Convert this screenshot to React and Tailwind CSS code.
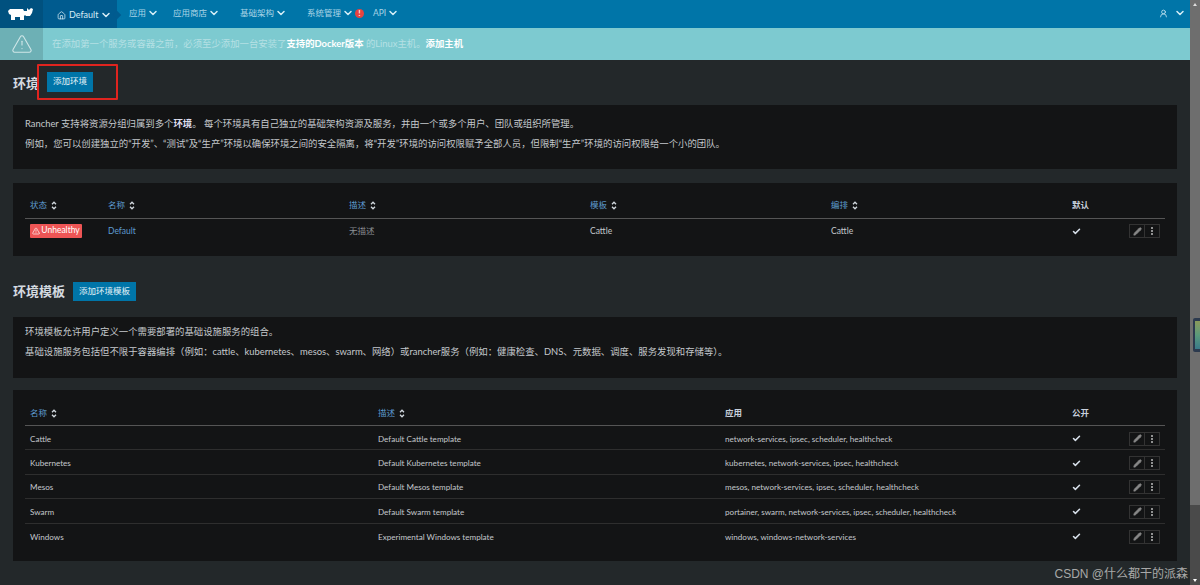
import React from 'react';
import { Check, ChevronDown, Home, Pencil, TriangleAlert, UserRound } from 'lucide-react';

const font = "font-['Lato','Noto_Sans_CJK_SC',sans-serif]";

function Logo() {
  return (
    <svg width="25" height="12" viewBox="0 0 25 12" fill="white">
      <path d="M0 3 L2 1 L15 1 L16 3 L19 3 L19 0 L21 2 L23 0 L25 1 L24 5 L22 8 L18 8 L17 7 L16 8 L16 12 L12 12 L12 9 L7 9 L7 12 L3 12 L3 7 L1 6 Z" />
    </svg>
  );
}

function Sort() {
  return (
    <svg width="6" height="9" viewBox="0 0 6 9" fill="none" stroke="#d4dae0" strokeWidth="1.3" className="ml-1 inline-block">
      <path d="M1 3.2 L3 1.2 L5 3.2 M1 5.8 L3 7.8 L5 5.8" />
    </svg>
  );
}

function NavItem({ label, className, children }) {
  return (
    <div className={`flex items-center gap-[1px] pb-[2px] text-[8.5px] text-[#a9d4e6] ${className}`}>
      {label}
      <ChevronDown size={12} strokeWidth={3} className="text-[#d5eef7]" />
      {children}
    </div>
  );
}

function RowActions() {
  return (
    <div className="flex h-[14px] w-[31px] border border-[#333]">
      <div className="flex flex-1 items-center justify-center border-r border-[#333]">
        <Pencil size={9} fill="#888" className="text-[#888]" />
      </div>
      <div className="flex flex-1 flex-col items-center justify-center gap-[1px]">
        <span className="h-[2px] w-[2px] rounded-full bg-[#bbb]" />
        <span className="h-[2px] w-[2px] rounded-full bg-[#bbb]" />
        <span className="h-[2px] w-[2px] rounded-full bg-[#bbb]" />
      </div>
    </div>
  );
}

const templates = [
  ['Cattle', 'Default Cattle template', 'network-services, ipsec, scheduler, healthcheck'],
  ['Kubernetes', 'Default Kubernetes template', 'kubernetes, network-services, ipsec, healthcheck'],
  ['Mesos', 'Default Mesos template', 'mesos, network-services, ipsec, scheduler, healthcheck'],
  ['Swarm', 'Default Swarm template', 'portainer, swarm, network-services, ipsec, scheduler, healthcheck'],
  ['Windows', 'Experimental Windows template', 'windows, windows-network-services'],
];

export default function App() {
  return (
    <div className={`${font} relative flex h-[585px] w-[1200px] overflow-hidden bg-[#23282a] text-[8.5px] text-[#c4c8cc]`}>
      <div className="flex w-[1190px] flex-col">
        {/* header */}
        <header className="flex h-[28px] items-center bg-[#0075a8]">
          <div className="flex h-full w-[43px] items-center justify-center bg-[#00517f] pr-[2px]">
            <Logo />
          </div>
          <div className="relative flex h-full w-[74px] items-center gap-[3px] bg-[#005b8f] pl-[14px] pt-[2px] text-[9px] text-[#d7edf6]">
            <Home size={9} />
            Default
            <ChevronDown size={12} strokeWidth={3} className="ml-[-1px]" />
            <span className="absolute right-[-3px] top-[12px] h-[6px] w-[6px] rotate-45 bg-[#005b8f]" />
          </div>
          <NavItem label="应用" className="ml-[12px] w-[44px]" />
          <NavItem label="应用商店" className="w-[67px]" />
          <NavItem label="基础架构" className="w-[67px]" />
          <NavItem label="系统管理" className="w-[66px]">
            <span className="flex h-[9px] w-[9px] items-center justify-center rounded-full bg-[#e8433f] text-[7px] font-bold leading-none text-white">!</span>
          </NavItem>
          <NavItem label="API" className="" />
          <div className="ml-auto flex items-center gap-[6px] pr-[4px] pb-[2px] text-[#d5eef7]">
            <UserRound size={9} />
            <ChevronDown size={12} strokeWidth={3} />
          </div>
        </header>

        {/* banner */}
        <div className="flex h-[32px] items-center bg-[#7dcad0] text-[9.4px] text-[#b5e0e4]">
          <div className="flex h-full w-[43px] items-center justify-center bg-[#6db0b5]">
            <TriangleAlert size={22} strokeWidth={1.2} className="text-[#cfe6e8]" />
          </div>
          <p className="ml-[9px]">
            在添加第一个服务或容器之前，必须至少添加一台安装了
            <span className="font-bold text-white">支持的Docker版本</span> 的Linux主机。
            <span className="font-bold text-white">添加主机</span>
          </p>
        </div>

        <main className="flex flex-col px-[13px]">
          <div className="flex h-[45px] items-center">
            <h2 className="mt-[3px] text-[13px] font-bold text-[#d4dae0]">环境</h2>
            <button className="ml-[8px] mt-[-2px] h-[20px] w-[46px] bg-[#0075a8] text-[8.5px] text-[#e6f3f8]">添加环境</button>
          </div>

          <section className="flex h-[64px] flex-col bg-[#131415] pl-[12px] pt-[13px] text-[9.4px] leading-[12px] text-[#c4c8cc]">
            <p>Rancher 支持将资源分组归属到多个<span className="font-bold text-[#dde]">环境</span>。 每个环境具有自己独立的基础架构资源及服务，并由一个或多个用户、团队或组织所管理。</p>
            <p className="mt-[8px]">例如，您可以创建独立的“开发”、“测试”及“生产”环境以确保环境之间的安全隔离，将“开发”环境的访问权限赋予全部人员，但限制“生产”环境的访问权限给一个小的团队。</p>
          </section>

          <section className="mt-[14px] h-[73px] bg-[#131415] px-[12px] pt-[14px]">
            <div className="grid h-[22px] grid-cols-[83px_241px_241px_241px_241px_1fr] items-center border-b border-[#555] pb-[5px] text-[#5e9bd0]">
              <span className="pl-[5px]">状态<Sort /></span>
              <span>名称<Sort /></span>
              <span>描述<Sort /></span>
              <span>模板<Sort /></span>
              <span>编排<Sort /></span>
              <span className="font-bold text-[#c8d0dc]">默认</span>
            </div>
            <div className="grid h-[24px] grid-cols-[83px_241px_241px_241px_241px_1fr] items-center">
              <span>
                <span className="ml-[5px] inline-flex h-[14px] w-[52px] items-center justify-center gap-[1px] rounded-[1px] bg-[#ee5555] text-[8.5px] text-white">
                  <TriangleAlert size={8} />Unhealthy
                </span>
              </span>
              <span className="text-[#5e9bd0]">Default</span>
              <span className="text-[#8a8e92]">无描述</span>
              <span>Cattle</span>
              <span>Cattle</span>
              <div className="flex items-center justify-between pr-[5px]">
                <Check size={9} strokeWidth={4} className="text-[#d8e0ea]" />
                <RowActions />
              </div>
            </div>
          </section>

          <div className="flex h-[61px] items-center pt-[9px]">
            <h2 className="mt-[2px] text-[13px] font-bold text-[#d4dae0]">环境模板</h2>
            <button className="ml-[8px] h-[19px] w-[63px] bg-[#0075a8] text-[8.5px] text-[#e6f3f8]">添加环境模板</button>
          </div>

          <section className="flex h-[61px] flex-col bg-[#131415] pl-[12px] pt-[9px] text-[9.4px] leading-[12px] text-[#c4c8cc]">
            <p>环境模板允许用户定义一个需要部署的基础设施服务的组合。</p>
            <p className="mt-[8px]">基础设施服务包括但不限于容器编排（例如：cattle、kubernetes、mesos、swarm、网络）或rancher服务（例如：健康检查、DNS、元数据、调度、服务发现和存储等）。</p>
          </section>

          <section className="mt-[12px] h-[171px] bg-[#131415] px-[12px] pt-[15px]">
            <div className="grid h-[21px] grid-cols-[353px_347px_347px_1fr] items-center border-b border-[#555] pb-[3px] text-[#5e9bd0]">
              <span className="pl-[5px]">名称<Sort /></span>
              <span>描述<Sort /></span>
              <span className="font-bold text-[#c8d0dc]">应用</span>
              <span className="font-bold text-[#c8d0dc]">公开</span>
            </div>
            {templates.map(([name, desc, apps], i) => (
              <div key={name} className={`grid h-[24.4px] grid-cols-[353px_347px_347px_1fr] items-center pt-[2px] text-[8.1px] ${i < 4 ? 'border-b border-[#2e2e2e]' : ''}`}>
                <span className="pl-[5px]">{name}</span>
                <span>{desc}</span>
                <span className="whitespace-nowrap">{apps}</span>
                <div className="flex items-center justify-between pr-[5px]">
                  <Check size={9} strokeWidth={4} className="text-[#d8e0ea]" />
                  <RowActions />
                </div>
              </div>
            ))}
          </section>
        </main>
      </div>

      {/* browser scrollbar */}
      <div className="relative flex w-[10px] flex-col bg-[#4a4a4a]">
        <div className="h-[505px] bg-[#6e6e6e]" />
        <span className="absolute left-[3px] top-[3px] border-x-[2px] border-b-[3px] border-x-transparent border-b-[#ddd]" />
        <span className="absolute bottom-[3px] left-[3px] border-x-[2px] border-t-[3px] border-x-transparent border-t-white" />
      </div>

      {/* little side widget over the scrollbar */}
      <div className="absolute right-0 top-[318px] h-[34px] w-[7px] rounded-l-[2px] bg-[#2c3a4e] py-[3px] pl-[2px]">
        <div className="h-full w-full bg-gradient-to-b from-[#8a9a5a] via-[#5a9a7a] to-[#3a7a8a]" />
      </div>
      <div className="absolute left-[37px] top-[64px] h-[36px] w-[81px] rounded-[1px] border-2 border-[#e0241f]" />
      <div className="absolute bottom-[2px] right-[12px] font-['Liberation_Sans','Noto_Sans_CJK_SC',sans-serif] text-[12px] text-[#a8a8a8]">CSDN @什么都干的派森</div>
    </div>
  );
}
